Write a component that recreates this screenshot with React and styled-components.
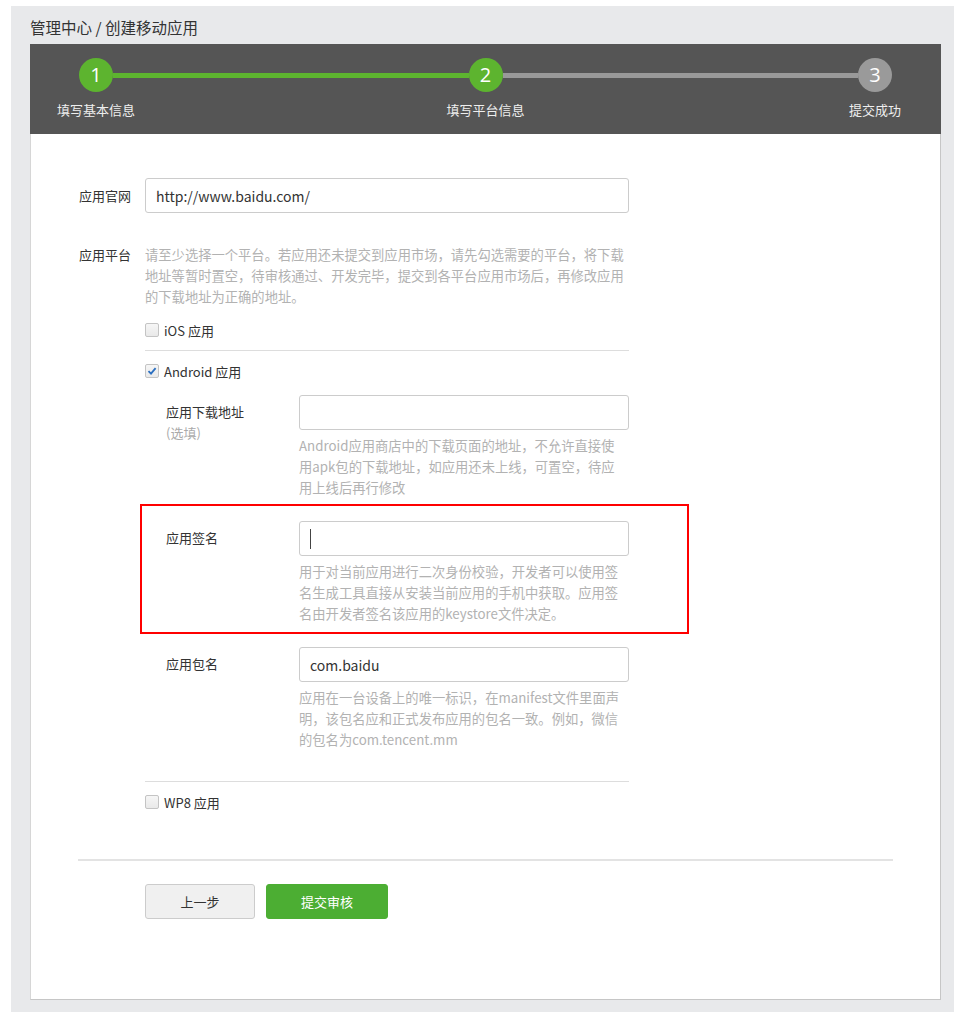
import React from 'react';
import styled, { createGlobalStyle, css } from 'styled-components';

const steps = [
  { num: 1, label: '填写基本信息', done: true },
  { num: 2, label: '填写平台信息', done: true },
  { num: 3, label: '提交成功', done: false },
];

const App = () => {
  return (
    <>
      <GlobalStyle />
      <Page>
        <Breadcrumb>管理中心 / 创建移动应用</Breadcrumb>
        <Card>
          <StepBar>
            {steps.map((s, i) => (
              <React.Fragment key={s.num}>
                {i > 0 && <Connector $active={s.done} />}
                <Step>
                  <Circle $active={s.done}>{s.num}</Circle>
                  <StepLabel>{s.label}</StepLabel>
                </Step>
              </React.Fragment>
            ))}
          </StepBar>

          <Body>
            <Row>
              <Label $tall>应用官网</Label>
              <Field>
                <InputBox>http://www.baidu.com/</InputBox>
              </Field>
            </Row>

            <Row $gap={31}>
              <Label>应用平台</Label>
              <Field>
                <Help>
                  请至少选择一个平台。若应用还未提交到应用市场，请先勾选需要的平台，将下载地址等暂时置空，待审核通过、开发完毕，提交到各平台应用市场后，再修改应用的下载地址为正确的地址。
                </Help>

                <CheckRow $gap={13}>
                  <Box />
                  <CheckText>iOS 应用</CheckText>
                </CheckRow>
                <Divider />
                <CheckRow>
                  <Box $checked>
                    <svg width="10" height="10" viewBox="0 0 10 10">
                      <path d="M1.5 5.2 L4 7.6 L8.6 2.2" fill="none" stroke="#2b6fc0" strokeWidth="1.8" />
                    </svg>
                  </Box>
                  <CheckText>Android 应用</CheckText>
                </CheckRow>

                <SubForm>
                  <SubRow>
                    <SubLabel>
                      应用下载地址
                      <Optional>(选填)</Optional>
                    </SubLabel>
                    <SubField>
                      <InputBox />
                      <Help $sub>
                        Android应用商店中的下载页面的地址，不允许直接使用apk包的下载地址，如应用还未上线，可置空，待应用上线后再行修改
                      </Help>
                    </SubField>
                  </SubRow>

                  <SubRow $highlight>
                    <SubLabel>应用签名</SubLabel>
                    <SubField>
                      <InputBox>
                        <Caret />
                      </InputBox>
                      <Help $sub>
                        用于对当前应用进行二次身份校验，开发者可以使用签名生成工具直接从安装当前应用的手机中获取。应用签名由开发者签名该应用的keystore文件决定。
                      </Help>
                    </SubField>
                  </SubRow>

                  <SubRow>
                    <SubLabel>应用包名</SubLabel>
                    <SubField>
                      <InputBox>com.baidu</InputBox>
                      <Help $sub>
                        应用在一台设备上的唯一标识，在manifest文件里面声明，该包名应和正式发布应用的包名一致。例如，微信的包名为com.tencent.mm
                      </Help>
                    </SubField>
                  </SubRow>
                </SubForm>

                <Divider $top={31} />
                <CheckRow>
                  <Box />
                  <CheckText>WP8 应用</CheckText>
                </CheckRow>
              </Field>
            </Row>

            <FooterLine />
            <Actions>
              <Button>上一步</Button>
              <Button $primary>提交审核</Button>
            </Actions>
          </Body>
        </Card>
      </Page>
    </>
  );
};

export default App;

const GlobalStyle = createGlobalStyle`
  body {
    margin: 0;
    background: #fff;
    font-family: "Noto Sans CJK SC", "Noto Sans", sans-serif;
    color: #333;
  }
`;

const Page = styled.div`
  margin: 6px 0 0 11px;
  padding: 0 13px 12px 19px;
  background: #e8e9eb;
`;

const Breadcrumb = styled.div`
  padding: 11px 0 7px;
  font-size: 15.5px;
  line-height: 20px;
  color: #333;
`;

const Card = styled.div`
  width: 911px;
  box-sizing: border-box;
  background: #fff;
  border: 1px solid #d6d6d6;
  border-top: none;
  border-right-color: #c6c6c6;
  border-bottom-color: #c6c6c6;
`;

const StepBar = styled.div`
  display: flex;
  align-items: flex-start;
  height: 90px;
  box-sizing: border-box;
  padding: 14px 19px 0;
  margin: 0 -1px 0 -1px;
  background: #555;
`;

const Step = styled.div`
  position: relative;
  z-index: 1;
  width: 94px;
  display: flex;
  flex-direction: column;
  align-items: center;
`;

const Circle = styled.div`
  width: 34px;
  height: 34px;
  border-radius: 50%;
  background: ${(p) => (p.$active ? '#5db42f' : '#9a9a9a')};
  color: #fff;
  font-family: "Open Sans", "Noto Sans", sans-serif;
  font-size: 20px;
  line-height: 34px;
  text-align: center;
`;

const StepLabel = styled.div`
  margin-top: 9px;
  font-size: 13px;
  line-height: 18px;
  color: #eee;
  white-space: nowrap;
`;

const Connector = styled.div`
  flex: 1;
  height: 5px;
  margin: 15px -30px 0;
  background: ${(p) => (p.$active ? '#5db42f' : '#999')};
`;

const Body = styled.div`
  padding: 44px 47px 80px 47px;
`;

const Row = styled.div`
  display: flex;
  align-items: flex-start;
  margin-top: ${(p) => p.$gap || 0}px;
`;

const Label = styled.div`
  width: 67px;
  flex-shrink: 0;
  padding-left: 1px;
  box-sizing: border-box;
  font-size: 13px;
  line-height: ${(p) => (p.$tall ? '35px' : '21px')};
  color: #333;
`;

const Field = styled.div`
  width: 484px;
`;

const InputBox = styled.div`
  display: flex;
  align-items: center;
  height: 35px;
  box-sizing: border-box;
  padding: 0 10px;
  border: 1px solid #ccc;
  border-radius: 3px;
  background: #fff;
  font-size: 14px;
  color: #333;
`;

const Caret = styled.span`
  width: 1px;
  height: 20px;
  background: #444;
`;

const Help = styled.div`
  font-size: 13.3px;
  line-height: 21px;
  color: #b2b2b2;
  ${(p) =>
    p.$sub &&
    css`
      margin-top: 5px;
      max-width: 321px;
    `}
`;

const CheckRow = styled.div`
  display: flex;
  align-items: center;
  gap: 5px;
  height: 20px;
  margin-top: ${(p) => (p.$gap !== undefined ? p.$gap : 10)}px;
`;

const Box = styled.span`
  display: inline-flex;
  align-items: center;
  justify-content: center;
  width: 14px;
  height: 14px;
  box-sizing: border-box;
  border: 1px solid #c4c4c4;
  border-radius: 2px;
  background: linear-gradient(#f6f6f6, #e9e9e9);
`;

const CheckText = styled.span`
  font-size: 13px;
  color: #333;
`;

const Divider = styled.div`
  height: 1px;
  margin-top: ${(p) => p.$top || 10}px;
  background: #ddd;
`;

const SubForm = styled.div`
  margin-top: 14px;
  padding-left: 21px;
  display: flex;
  flex-direction: column;
  gap: 23px;
`;

const SubRow = styled.div`
  position: relative;
  display: flex;
  align-items: flex-start;

  ${(p) =>
    p.$highlight &&
    css`
      &::after {
        content: '';
        position: absolute;
        inset: -17px -60px -10px -26px;
        border: 2px solid #f00;
        pointer-events: none;
      }
    `}
`;

const SubLabel = styled.div`
  width: 133px;
  flex-shrink: 0;
  padding-top: 8px;
  font-size: 13px;
  line-height: 18px;
  color: #333;
`;

const Optional = styled.div`
  margin-top: 3px;
  color: #aaa;
`;

const SubField = styled.div`
  width: 330px;
`;

const FooterLine = styled.div`
  height: 2px;
  margin-top: 47px;
  background: #e3e3e3;
`;

const Actions = styled.div`
  display: flex;
  gap: 11px;
  margin-top: 23px;
  padding-left: 67px;
`;

const Button = styled.button`
  height: 35px;
  width: ${(p) => (p.$primary ? '122px' : '110px')};
  border-radius: 3px;
  border: 1px solid ${(p) => (p.$primary ? '#4cae33' : '#ccc')};
  background: ${(p) => (p.$primary ? '#4cae33' : '#f0f0f0')};
  color: ${(p) => (p.$primary ? '#fff' : '#333')};
  font-family: inherit;
  font-size: 13px;
  cursor: pointer;
`;
